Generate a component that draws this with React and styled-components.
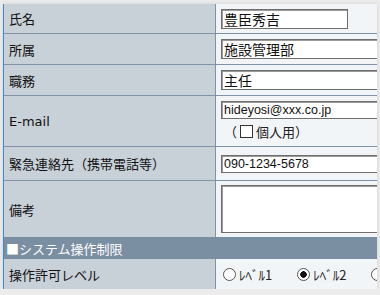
import React from "react";
import styled, { createGlobalStyle } from "styled-components";

const GlobalStyle = createGlobalStyle`
  html, body {
    margin: 0;
    padding: 0;
    background: #ececec;
    overflow: hidden;
  }
  body {
    font-family: "Noto Sans CJK JP", "Noto Sans", sans-serif;
    font-size: 13px;
    color: #111;
  }
`;

const Frame = styled.div`
  margin: 4px 0 0 3px;
  width: 373px;
  border-left: 1px solid #3b8ad4;
  overflow: hidden;
  box-shadow: 0 0 4px rgba(0, 0, 0, 0.12);
`;

const Sheet = styled.div`
  width: 460px;
  display: flex;
  flex-direction: column;
`;

const Row = styled.div`
  display: flex;
  height: ${(p) => p.$h}px;
  border-bottom: ${(p) => (p.$last ? "none" : "1px solid #8093a8")};
`;

const Label = styled.div`
  width: 206px;
  flex: none;
  display: flex;
  align-items: center;
  padding-left: 5px;
  background: #c8d0d8;
  border-right: 1px solid #7f92a7;
  white-space: nowrap;
  font-family: ${(p) => (p.$latin ? '"DejaVu Sans", sans-serif' : "inherit")};
  font-size: 13px;
`;

const Value = styled.div`
  flex: 1;
  background: #f2f5f7;
  padding-left: 5px;
  display: flex;
  flex-direction: column;
  justify-content: ${(p) => (p.$top ? "flex-start" : "center")};
  padding-top: ${(p) => (p.$top ? "4px" : "0")};
`;

const TextBox = styled.input`
  box-sizing: border-box;
  width: ${(p) => p.$w}px;
  height: ${(p) => p.$h || 20}px;
  margin: 0;
  padding: 0 2px;
  border: 1px solid #6e6e6e;
  box-shadow: inset 1px 1px 0 #9a9a9a;
  background: #fff;
  font-family: ${(p) => (p.$latin ? '"Liberation Sans", sans-serif' : '"Noto Sans CJK JP", sans-serif')};
  font-size: ${(p) => (p.$latin ? "12.5px" : "14px")};
  color: #111;
  outline: none;
`;

const Memo = styled.textarea`
  box-sizing: border-box;
  width: 200px;
  height: 48px;
  margin: 0;
  padding: 0;
  border: 1px solid #6e6e6e;
  box-shadow: inset 1px 1px 0 #9a9a9a;
  background: #fff;
  resize: none;
`;

const Private = styled.label`
  display: flex;
  align-items: center;
  gap: 3px;
  margin-top: 3px;
  padding-left: 3px;
  font-size: 13px;
  color: #222;
`;

const Check = styled.span`
  width: 11px;
  height: 11px;
  border: 1px solid #333;
  background: #fff;
`;

const Section = styled.div`
  height: 22px;
  display: flex;
  align-items: center;
  padding-left: 2px;
  background: #7b8fa3;
  color: #fff;
  font-size: 13px;
`;

const Radios = styled.div`
  display: flex;
  align-items: center;
  gap: 25px;
  padding-left: 2px;
`;

const Choice = styled.label`
  display: flex;
  align-items: center;
  gap: 3px;
  font-size: 13px;
  color: #222;
`;

const Dot = styled.span`
  width: 11px;
  height: 11px;
  border-radius: 50%;
  border: 1px solid #555;
  background: ${(p) =>
    p.$on ? "radial-gradient(circle, #111 0 3px, #fff 3.5px)" : "#fff"};
`;

const levels = [
  { text: "ﾚﾍﾞﾙ1", on: false },
  { text: "ﾚﾍﾞﾙ2", on: true },
  { text: "ﾚﾍﾞﾙ3", on: false },
];

export default function App() {
  return (
    <>
      <GlobalStyle />
      <Frame>
        <Sheet>
          <Row $h={29}>
            <Label>氏名</Label>
            <Value>
              <TextBox $w={127} defaultValue="豊臣秀吉" readOnly />
            </Value>
          </Row>
          <Row $h={30}>
            <Label>所属</Label>
            <Value>
              <TextBox $w={200} defaultValue="施設管理部" readOnly />
            </Value>
          </Row>
          <Row $h={30}>
            <Label>職務</Label>
            <Value>
              <TextBox $w={200} defaultValue="主任" readOnly />
            </Value>
          </Row>
          <Row $h={50}>
            <Label $latin>E-mail</Label>
            <Value>
              <TextBox $w={200} $h={18} $latin defaultValue="hideyosi@xxx.co.jp" readOnly />
              <Private>
                （<Check />個人用）
              </Private>
            </Value>
          </Row>
          <Row $h={33}>
            <Label>緊急連絡先（携帯電話等）</Label>
            <Value>
              <TextBox $w={200} $h={18} $latin defaultValue="090-1234-5678" readOnly />
            </Value>
          </Row>
          <Row $h={56} $last>
            <Label>備考</Label>
            <Value $top>
              <Memo readOnly />
            </Value>
          </Row>
          <Section>■システム操作制限</Section>
          <Row $h={30} $last>
            <Label>操作許可レベル</Label>
            <Value>
              <Radios>
                {levels.map((l) => (
                  <Choice key={l.text}>
                    <Dot $on={l.on} />
                    {l.text}
                  </Choice>
                ))}
              </Radios>
            </Value>
          </Row>
        </Sheet>
      </Frame>
    </>
  );
}
